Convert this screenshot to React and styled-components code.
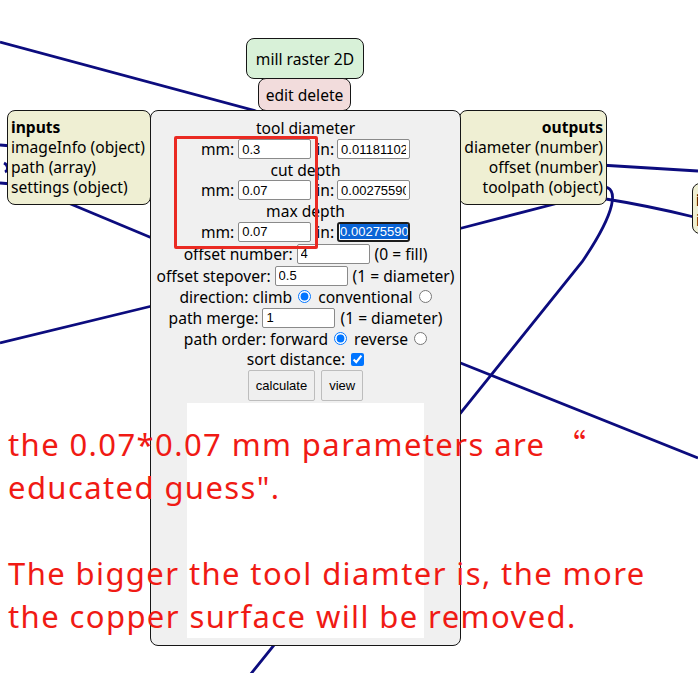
import React from "react";
import styled, { createGlobalStyle } from "styled-components";

const Global = createGlobalStyle`
  html, body { margin: 0; padding: 0; background: #fff; overflow: hidden; }
  body { font-family: "Noto Sans", "Open Sans", sans-serif; }
`;

const Canvas = styled.div`
  position: relative;
  width: 698px;
  height: 673px;
  overflow: hidden;
  background: #fff;
  color: #000;
  font-family: "Noto Sans", "Open Sans", sans-serif;
  font-size: 15.6px;
`;

const Wires = styled.svg`
  position: absolute;
  left: 0;
  top: 0;
  width: 698px;
  height: 673px;
`;

const Node = styled.div`
  position: absolute;
  left: ${(p) => p.$x}px;
  top: ${(p) => p.$y}px;
  width: ${(p) => p.$w}px;
  height: ${(p) => p.$h}px;
  box-sizing: border-box;
  border: 1.5px solid #161616;
  border-radius: 8px;
  background: ${(p) => p.$bg};
`;

const TitleNode = styled(Node)`
  display: flex;
  align-items: center;
  justify-content: center;
  white-space: nowrap;
`;

const PortNode = styled(Node)`
  padding: 6px 3px 0 3px;
  line-height: 20px;
  text-align: ${(p) => p.$align};
  white-space: nowrap;
  overflow: hidden;
`;

const PortTitle = styled.div`
  font-weight: 700;
`;

const Panel = styled(Node)`
  display: flex;
  flex-direction: column;
  align-items: center;
  padding-top: 7px;
`;

const Row = styled.div`
  display: flex;
  align-items: center;
  justify-content: center;
  height: ${(p) => p.$h}px;
  white-space: nowrap;
`;

const Label = styled.span`
  margin-right: ${(p) => p.$mr ?? 4}px;
  margin-left: ${(p) => p.$ml ?? 0}px;
`;

const Field = styled.input.attrs({ readOnly: true, type: "text" })`
  width: ${(p) => p.$w ?? 73}px;
  height: 20px;
  box-sizing: border-box;
  border: 1px solid #8a8a8a;
  border-radius: 2px;
  padding: 0 3px;
  margin: 0;
  font: 13px "Liberation Sans", Arial, sans-serif;
  background: #fff;
  color: #000;
  outline: none;
`;

const FocusField = styled.div`
  width: 73px;
  height: 20px;
  box-sizing: border-box;
  border: 2px solid #1c1c1c;
  border-radius: 3px;
  padding: 0 1px;
  overflow: hidden;
  background: #fff;
  display: flex;
  align-items: center;
  font: 13px "Liberation Sans", Arial, sans-serif;
`;

const Selection = styled.span`
  background: #0a64d6;
  color: #fff;
  line-height: 15px;
  white-space: nowrap;
`;

const Choice = styled.input`
  width: 13px;
  height: 13px;
  margin: 0 ${(p) => p.$mr ?? 7}px 0 ${(p) => p.$ml ?? 6}px;
  accent-color: #0075ff;
`;

const Buttons = styled.div`
  display: flex;
  gap: 6px;
  margin-top: 1px;
`;

const Button = styled.button`
  height: 31px;
  padding: 0 7px;
  font: 13px "Liberation Sans", Arial, sans-serif;
  background: #efefef;
  border: 1px solid #bdbdbd;
  border-radius: 2px;
  color: #000;
`;

const Preview = styled.div`
  width: 237px;
  height: 235px;
  margin-top: 2px;
  background: #fff;
`;

const Highlight = styled.div`
  position: absolute;
  left: 174px;
  top: 136px;
  width: 144px;
  height: 113px;
  box-sizing: border-box;
  border: 3px solid #ea2a22;
  border-radius: 2px;
`;

const Note = styled.div`
  position: absolute;
  left: 8px;
  top: 421px;
  color: #f01a14;
  font-family: "Noto Sans", "Noto Sans CJK SC", sans-serif;
  font-size: 31px;
  letter-spacing: 1.4px;
  line-height: 43px;
  white-space: nowrap;
`;

const CjkQuote = styled.span`
  font-family: "Noto Sans CJK SC", sans-serif;
  letter-spacing: 0;
`;

const Gap = styled.div`
  height: 43px;
`;

const wire = { fill: "none", stroke: "#0c0c7e", strokeWidth: 2.8 };

export default function App() {
  return (
    <>
      <Global />
      <Canvas>
        <Wires viewBox="0 0 698 673">
          <path d="M0 42 L256 111" {...wire} />
          <path d="M0 145 L12 146" {...wire} />
          <path d="M0 183 L12 184" {...wire} />
          <path d="M4 163 C8 165 9 170 5 172" {...wire} />
          <path d="M30 187 L152 238" {...wire} />
          <path d="M0 343 L152 306" {...wire} />
          <path d="M458 229 L570 200" {...wire} />
          <path d="M600 165 L698 171" {...wire} />
          <path d="M600 198 Q650 206 694 217" {...wire} />
          <path d="M458 362 L698 458" {...wire} />
          <path d="M602 187 C620 186 616 212 582 262 L250 675" {...wire} />
        </Wires>

        <TitleNode $x={246} $y={38} $w={118} $h={41} $bg="#d8f1d8">
          mill raster 2D
        </TitleNode>
        <TitleNode $x={258} $y={78} $w={93} $h={33} $bg="#f2dcdc">
          edit delete
        </TitleNode>

        <PortNode $x={7} $y={110} $w={144} $h={95} $bg="#efefd3" $align="left">
          <PortTitle>inputs</PortTitle>
          <div>imageInfo (object)</div>
          <div>path (array)</div>
          <div>settings (object)</div>
        </PortNode>

        <PortNode $x={459} $y={110} $w={148} $h={95} $bg="#efefd3" $align="right">
          <PortTitle>outputs</PortTitle>
          <div>diameter (number)</div>
          <div>offset (number)</div>
          <div>toolpath (object)</div>
        </PortNode>

        <PortNode $x={692} $y={183} $w={80} $h={51} $bg="#efefd3" $align="left">
          <PortTitle>i</PortTitle>
          <div>i</div>
        </PortNode>

        <Panel $x={150} $y={110} $w={311} $h={536} $bg="#f0f0f0">
          <Row $h={20.7}>tool diameter</Row>
          <Row $h={20.7}>
            <Label>mm:</Label>
            <Field value="0.3" />
            <Label $ml={5} $mr={3}>in:</Label>
            <Field value="0.01181102" />
          </Row>
          <Row $h={20.7}>cut depth</Row>
          <Row $h={20.7}>
            <Label>mm:</Label>
            <Field value="0.07" />
            <Label $ml={5} $mr={3}>in:</Label>
            <Field value="0.00275590" />
          </Row>
          <Row $h={20.7}>max depth</Row>
          <Row $h={20.7}>
            <Label>mm:</Label>
            <Field value="0.07" />
            <Label $ml={5} $mr={3}>in:</Label>
            <FocusField>
              <Selection>0.00275590</Selection>
            </FocusField>
          </Row>
          <Row $h={23}>
            <Label>offset number:</Label>
            <Field value="4" />
            <Label $ml={5} $mr={0}>(0 = fill)</Label>
          </Row>
          <Row $h={21}>
            <Label>offset stepover:</Label>
            <Field value="0.5" />
            <Label $ml={5} $mr={0}>(1 = diameter)</Label>
          </Row>
          <Row $h={21}>
            <span>direction: climb</span>
            <Choice type="radio" name="dir" defaultChecked />
            <span>conventional</span>
            <Choice type="radio" name="dir" $mr={0} />
          </Row>
          <Row $h={21}>
            <Label>path merge:</Label>
            <Field value="1" />
            <Label $ml={5} $mr={0}>(1 = diameter)</Label>
          </Row>
          <Row $h={21}>
            <span>path order: forward</span>
            <Choice type="radio" name="order" defaultChecked />
            <span>reverse</span>
            <Choice type="radio" name="order" $mr={0} />
          </Row>
          <Row $h={20}>
            <span>sort distance:</span>
            <Choice type="checkbox" defaultChecked $mr={0} />
          </Row>
          <Buttons>
            <Button>calculate</Button>
            <Button>view</Button>
          </Buttons>
          <Preview />
        </Panel>

        <Highlight />
        <Note>
          <div>
            the 0.07*0.07 mm parameters are <CjkQuote>“</CjkQuote>
          </div>
          <div>educated guess".</div>
          <Gap />
          <div>The bigger the tool diamter is, the more</div>
          <div>the copper surface will be removed.</div>
        </Note>
      </Canvas>
    </>
  );
}
